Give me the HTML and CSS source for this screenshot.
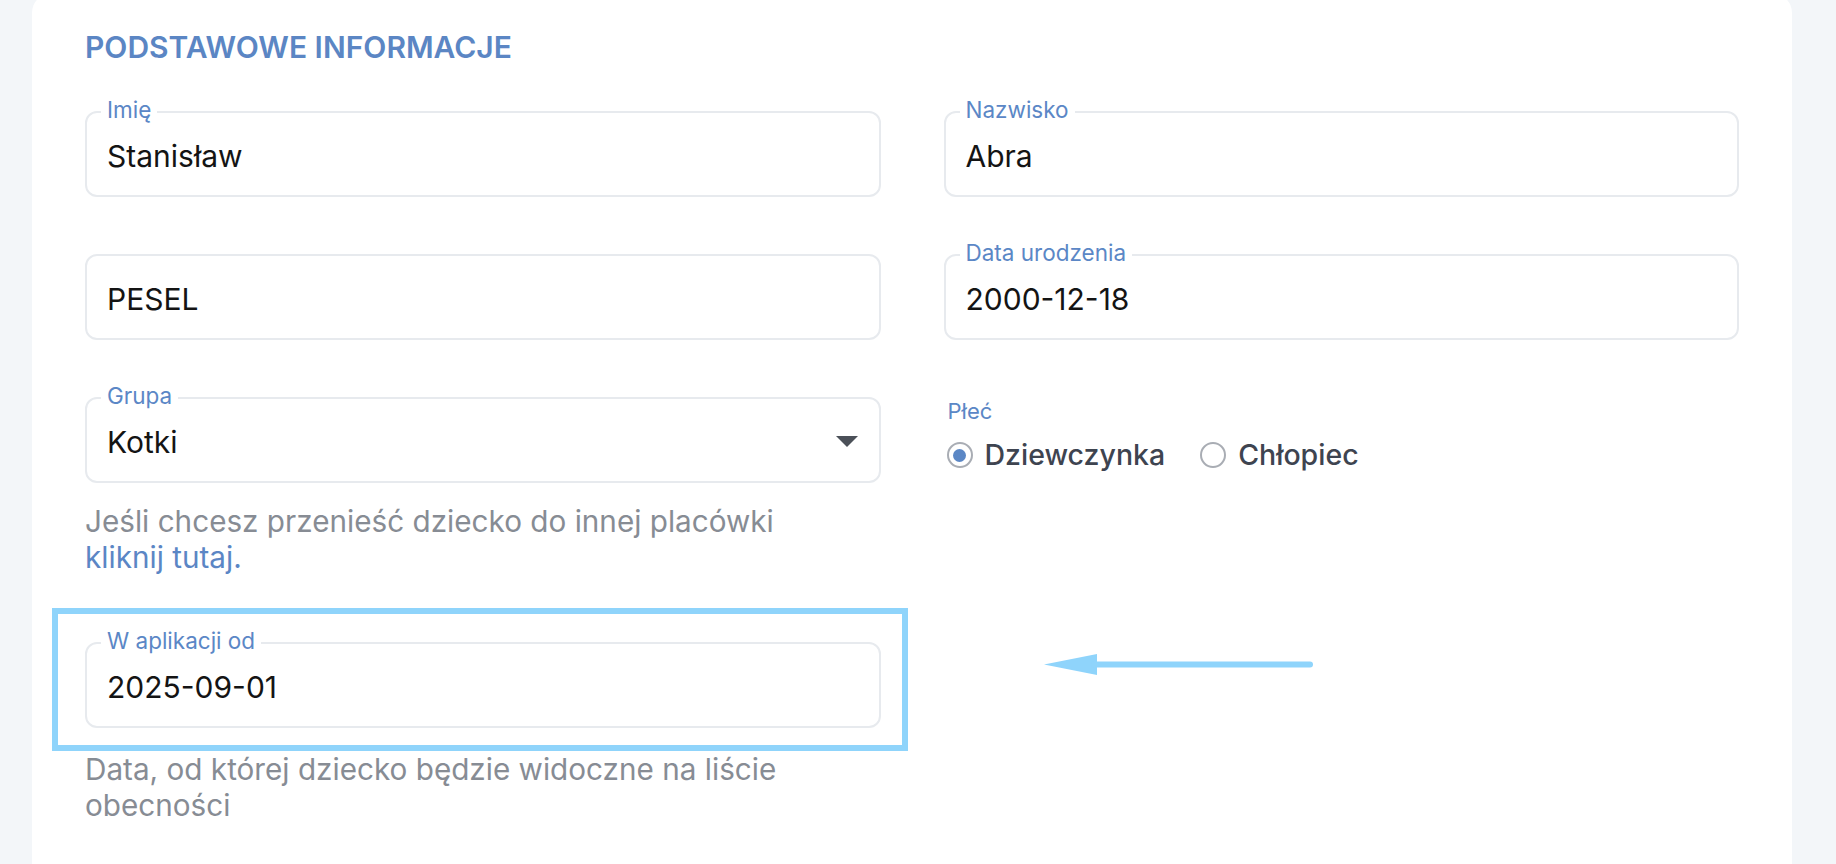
FILE: index.html
```html
<!DOCTYPE html>
<html lang="pl">
<head>
<meta charset="utf-8">
<title>Podstawowe informacje</title>
<link rel="stylesheet" href="styles.css">
</head>
<body>
<main class="card">
  <h2 class="section-title">PODSTAWOWE INFORMACJE</h2>

  <div class="row">
    <div class="field">
      <span class="field-label">Imię</span>
      <span class="field-value">Stanisław</span>
    </div>
    <div class="field">
      <span class="field-label">Nazwisko</span>
      <span class="field-value">Abra</span>
    </div>
  </div>

  <div class="row">
    <div class="field">
      <span class="field-value">PESEL</span>
    </div>
    <div class="field">
      <span class="field-label">Data urodzenia</span>
      <span class="field-value">2000-12-18</span>
    </div>
  </div>

  <div class="row">
    <div class="col">
      <div class="field field-select">
        <span class="field-label">Grupa</span>
        <span class="field-value">Kotki</span>
        <span class="caret"></span>
      </div>
      <p class="help">Jeśli chcesz przenieść dziecko do innej placówki<br><a class="link" href="#">kliknij tutaj.</a></p>
    </div>
    <div class="col">
      <div class="plain-label">Płeć</div>
      <div class="radios">
        <label class="radio"><span class="radio-circle checked"></span><span class="radio-text">Dziewczynka</span></label>
        <label class="radio"><span class="radio-circle"></span><span class="radio-text">Chłopiec</span></label>
      </div>
    </div>
  </div>

  <div class="row row-tight">
    <div class="col">
      <div class="highlight">
        <div class="field">
          <span class="field-label">W aplikacji od</span>
          <span class="field-value">2025-09-01</span>
        </div>
      </div>
      <p class="help help-after">Data, od której dziecko będzie widoczne na liście obecności</p>
    </div>
    <div class="col">
      <svg class="pointer-arrow" width="272" height="24" viewBox="0 0 272 24" aria-hidden="true">
        <path d="M0 11.5 L53 1 L53 22 Z" fill="#8fd4fb"/>
        <line x1="50" y1="11.5" x2="266" y2="11.5" stroke="#8fd4fb" stroke-width="6" stroke-linecap="round"/>
      </svg>
    </div>
  </div>
</main>
</body>
</html>
```

FILE: styles.css
```css
* { box-sizing: border-box; }

html, body {
  margin: 0;
  padding: 0;
  background: #f3f6f9;
  font-family: Inter, "Noto Sans", "Liberation Sans", sans-serif;
  overflow: hidden;
}

.card {
  margin: -7px 44px 0 32px;
  background: #ffffff;
  border-radius: 20px;
  padding: 36px 53px 80px;
  min-height: 900px;
}

.section-title {
  margin: 0 0 46px;
  font-size: 30px;
  line-height: 36px;
  font-weight: 600;
  color: #5b86c4;
  letter-spacing: 0;
}

.row {
  display: grid;
  grid-template-columns: 1fr 1fr;
  column-gap: 63px;
  align-items: start;
}

.row + .row { margin-top: 57px; }
.row + .row-tight { margin-top: 33px; }

.col { display: flex; flex-direction: column; align-items: stretch; }

.field {
  position: relative;
  height: 86px;
  border: 2px solid #e7eaee;
  border-radius: 12px;
  padding: 3px 21px 0 20px;
  display: flex;
  align-items: center;
  justify-content: space-between;
  background: #ffffff;
}

.field-label {
  position: absolute;
  top: -14px;
  left: 14px;
  padding: 0 6px;
  background: #ffffff;
  font-size: 22.5px;
  line-height: 22px;
  color: #5b87c6;
}

.field-value {
  font-size: 30px;
  line-height: 36px;
  color: #141414;
  font-weight: 400;
}

.caret {
  width: 0;
  height: 0;
  border-left: 11px solid transparent;
  border-right: 11px solid transparent;
  border-top: 11px solid #4b5058;
}

.help {
  margin: 20px 0 0;
  font-size: 29.7px;
  line-height: 36px;
  color: #878c94;
}

.help-after { margin-top: 0; }

.link {
  color: #5b86c5;
  text-decoration: none;
}

.plain-label {
  margin-top: 3px;
  font-size: 22px;
  line-height: 22px;
  color: #5b87c6;
  padding-left: 4px;
}

.radios {
  margin-top: 16px;
  display: flex;
  align-items: center;
}

.radio {
  display: flex;
  align-items: center;
  margin-right: 32px;
}

.radio-circle {
  width: 26px;
  height: 26px;
  border-radius: 50%;
  border: 2px solid #a9adb4;
  margin-left: 3px;
  margin-right: 12px;
  display: flex;
  align-items: center;
  justify-content: center;
  background: #ffffff;
}

.radio-circle.checked::after {
  content: "";
  width: 13px;
  height: 13px;
  border-radius: 50%;
  background: #5b87c5;
}

.radio-text {
  font-size: 28.5px;
  line-height: 34px;
  font-weight: 500;
  color: #3e4450;
}

.highlight {
  border: 6px solid #8fd4fb;
  margin: 0 -27px 0 -33px;
  padding: 28px 21px 17px 27px;
}

.pointer-arrow {
  display: block;
  margin: 45px 0 0 100px;
}
```
